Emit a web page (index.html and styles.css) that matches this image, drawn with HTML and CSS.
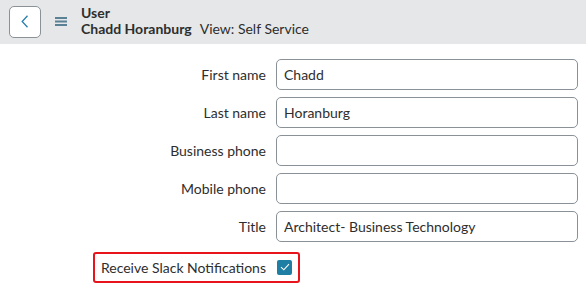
FILE: index.html
```html
<!DOCTYPE html>
<html lang="en">
<head>
    <meta charset="UTF-8">
    <meta name="viewport" content="width=device-width, initial-scale=1.0">
    <title>User - Chadd Horanburg</title>
    <link rel="stylesheet" href="styles.css">
</head>
<body>

    <!-- Cabeçalho -->
    <header class="topbar">
        <button class="backBtn" aria-label="Back">
            <svg width="8" height="13" viewBox="0 0 8 13">
                <path d="M6.5 0.8 L1.2 6.5 L6.5 12.2" fill="none" stroke="#2a7fae" stroke-width="1.3"/>
            </svg>
        </button>
        <span class="menuIcon">
            <svg width="12" height="9" viewBox="0 0 12 9">
                <rect x="0" y="0" width="12" height="2" fill="#5b8294"/>
                <rect x="0" y="3.5" width="12" height="2" fill="#5b8294"/>
                <rect x="0" y="7" width="12" height="2" fill="#5b8294"/>
            </svg>
        </span>
        <div class="titulo">
            <div class="tabela">User</div>
            <div class="registro"><strong>Chadd Horanburg</strong><span class="view">View: Self Service</span></div>
        </div>
    </header>

    <!-- Formulário -->
    <form class="userForm">
        <label for="firstName">First name</label>
        <input type="text" id="firstName" value="Chadd">

        <label for="lastName">Last name</label>
        <input type="text" id="lastName" value="Horanburg">

        <label for="businessPhone">Business phone</label>
        <input type="text" id="businessPhone" value="">

        <label for="mobilePhone">Mobile phone</label>
        <input type="text" id="mobilePhone" value="">

        <label for="title">Title</label>
        <input type="text" id="title" value="Architect- Business Technology">

        <div class="checkRow">
            <span class="destaque"></span>
            <label for="slack">Receive Slack Notifications</label>
            <span class="caixa">
                <svg width="10" height="8" viewBox="0 0 10 8">
                    <path d="M1 4.2 L3.8 6.8 L9 1.2" fill="none" stroke="#ffffff" stroke-width="1.1"/>
                </svg>
            </span>
        </div>
    </form>

</body>
</html>
```

FILE: styles.css
```css
body {
    font-family: Lato, "Open Sans", Arial, sans-serif;
    font-size: 14px;
    color: #2e2e2e;
    margin: 0;
    background-color: #ffffff;
}

.topbar {
    display: flex;
    align-items: center;
    height: 44px;
    background-color: #e5e7e8;
    padding-left: 9px;
    box-sizing: border-box;
}

.backBtn {
    width: 32px;
    height: 32px;
    margin-top: -1px;
    border: 1px solid #8a9298;
    border-radius: 5px;
    background-color: #ffffff;
    display: flex;
    align-items: center;
    justify-content: center;
    padding: 0;
    cursor: pointer;
}

.menuIcon {
    display: flex;
    margin-left: 14px;
    margin-top: -1px;
}

.titulo {
    margin-left: 14px;
    margin-top: -2px;
    line-height: 16px;
}

.tabela {
    font-weight: bold;
}

.registro strong {
    font-weight: bold;
}

.view {
    margin-left: 8px;
}

.userForm {
    display: grid;
    grid-template-columns: 258px 1fr;
    column-gap: 10px;
    row-gap: 7px;
    padding: 15px 8px 0 8px;
}

.userForm label {
    text-align: right;
    align-self: center;
}

.userForm input[type="text"] {
    height: 31px;
    box-sizing: border-box;
    border: 1px solid #8a9298;
    border-radius: 5px;
    padding: 0 7px;
    font-family: inherit;
    font-size: 14px;
    color: #2e2e2e;
    outline: none;
}

.checkRow {
    grid-column: 1 / -1;
    display: grid;
    grid-template-columns: 258px 1fr;
    column-gap: 10px;
    align-items: center;
    height: 31px;
    margin-top: 3px;
    position: relative;
}

.checkRow label {
    text-align: right;
}

.caixa {
    width: 15px;
    height: 15px;
    margin-top: -1px;
    margin-left: 1px;
    background-color: #1f7ea3;
    border-radius: 2px;
    display: flex;
    align-items: center;
    justify-content: center;
}

.destaque {
    position: absolute;
    left: 85px;
    top: 0;
    width: 207px;
    height: 31px;
    box-sizing: border-box;
    border: 2px solid #e8141b;
    border-radius: 3px;
}
```
